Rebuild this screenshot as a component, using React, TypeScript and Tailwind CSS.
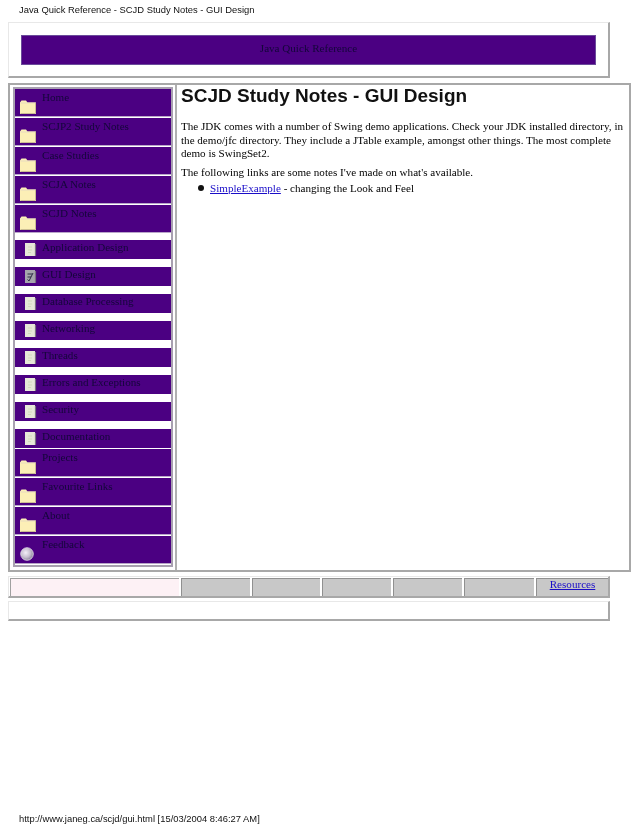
const Folder = () => (
  <svg width="16" height="14" viewBox="0 0 16 14" className="shrink-0">
    <path d="M0 2.5 L1.5 0.5 H6 L7.5 2.5 H16 V14 H0 Z" fill="#fcefb6" />
    <path d="M0.5 3 H15.5" stroke="#e8dcc0" strokeWidth="1" />
    <path d="M15.5 3 V13.5 H0.5" fill="none" stroke="#cbbd92" strokeWidth="1" />
  </svg>
);
const Doc = ({ active }: { active?: boolean }) => (
  <svg width="12" height="13" viewBox="0 0 12 13" className="shrink-0">
    <rect x="0" y="0" width="10" height="13" fill={active ? "#a5a5ad" : "#e6e8d8"} />
    <path d="M10.5 1 V13" stroke="#77727f" strokeWidth="1.2" />
    {active ? (
      <path d="M2.5 9.5 L4 11 L8 3 M2.5 4 H7 M2.5 7 H6" fill="none" stroke="#2c2c44" strokeWidth="1" />
    ) : (
      <path d="M3 4 H7 M3 7 H7 M3 9.5 H6" stroke="#d2dabd" strokeWidth="1" />
    )}
  </svg>
);
const Ball = () => (
  <svg width="14" height="14" viewBox="0 0 14 14" className="shrink-0">
    <defs>
      <radialGradient id="b" cx="0.4" cy="0.4" r="0.6">
        <stop offset="0" stopColor="#f4eef8" />
        <stop offset="0.6" stopColor="#c8c0d0" />
        <stop offset="1" stopColor="#9088a0" />
      </radialGradient>
    </defs>
    <circle cx="7" cy="7" r="6.3" fill="url(#b)" stroke="#e8e4ee" strokeWidth="0.8" />
  </svg>
);

const MainRow = ({ label, icon }: { label: string; icon?: "ball" }) => (
  <div className="h-[28px] bg-[#4b0082] border-b border-[#b9a6c9] flex pl-[5px] mb-px last:mb-0">
    <div className="pt-[11px] w-[21px]">{icon === "ball" ? <Ball /> : <Folder />}</div>
    <div className="pt-px pl-px text-[11.1px] leading-[14px] text-[#14063a]">{label}</div>
  </div>
);

const SubRow = ({ label, active, last }: { label: string; active?: boolean; last?: boolean }) => (
  <div className={`h-[19px] bg-[#4b0082] flex pl-[10px] ${last ? "mb-px" : "mb-2"}`}>
    <div className="w-[17px] pt-[3px]"><Doc active={active} /></div>
    <div className="text-[11.1px] leading-[14px] text-[#14063a]">{label}</div>
  </div>
);

export default function App() {
  return (
    <div className="h-[826px] bg-white flex flex-col font-['Liberation_Serif',serif] text-[11.1px] text-black overflow-hidden blur-[0.3px]">
      <div className="pl-[19px] pt-[3px] h-[22px] font-['Liberation_Sans',sans-serif] text-[9.4px] leading-[13px] text-[#111]">
        Java Quick Reference - SCJD Study Notes - GUI Design
      </div>

      <div className="ml-2 w-[602px] h-[56px] bg-white border border-[#e8e8e8] border-r-2 border-b-2 border-r-[#a8a8a8] border-b-[#a8a8a8] px-3 pt-3">
        <div className="h-[30px] bg-[#4b0082] border border-[#6a4a9a] text-center leading-[25px] text-[#14063a]">
          Java Quick Reference
        </div>
      </div>

      <div className="ml-2 mt-[5px] w-[623px] h-[489px] border-2 border-[#a8a8a8] flex">
        <div className="w-[167px] h-[485px] border-r-2 border-[#b0b0b0] pl-[3px] pt-[2px] shrink-0">
          <div className="w-[160px] h-[480px] border-2 border-[#a8a0b0] flex flex-col">
            <MainRow label="Home" />
            <MainRow label="SCJP2 Study Notes" />
            <MainRow label="Case Studies" />
            <MainRow label="SCJA Notes" />
            <MainRow label="SCJD Notes" />
            <div className="h-[6px]" />
            <SubRow label="Application Design" />
            <SubRow label="GUI Design" active />
            <SubRow label="Database Processing" />
            <SubRow label="Networking" />
            <SubRow label="Threads" />
            <SubRow label="Errors and Exceptions" />
            <SubRow label="Security" />
            <SubRow label="Documentation" last />
            <MainRow label="Projects" />
            <MainRow label="Favourite Links" />
            <MainRow label="About" />
            <MainRow label="Feedback" icon="ball" />
          </div>
        </div>
        <div className="pl-[4px]">
          <h1 className="font-['Liberation_Sans',sans-serif] font-bold text-[19px] leading-[22px] mb-[13px] text-[#111]">
            SCJD Study Notes - GUI Design
          </h1>
          <p className="leading-[13.5px] w-[446px] mb-[4px]">
            The JDK comes with a number of Swing demo applications. Check your JDK installed directory, in the demo/jfc directory. They include a JTable example, amongst other things. The most complete demo is SwingSet2.
          </p>
          <p className="leading-[14px]">The following links are some notes I've made on what's available.</p>
          <div className="flex items-center leading-[14px] pl-[17px] mt-[2px]">
            <span className="w-[6px] h-[6px] rounded-full bg-[#111] mr-[6px]" />
            <span><a className="text-[#1a0dc8] underline">SimpleExample</a> - changing the Look and Feel</span>
          </div>
        </div>
      </div>

      <div className="ml-2 mt-[4px] w-[602px] h-[22px] border-b-2 border-r-2 border-t border-l border-t-[#e8e8e8] border-l-[#e8e8e8] border-[#a8a8a8] flex gap-[2px] pl-px pt-px">
        <div className="w-[169px] h-[18px] bg-[#fdf1f5] border-l border-t border-[#a0a0a0]" />
        <div className="w-[69px] h-[18px] bg-[#c8c8c8] border-l border-t border-[#909090]" />
        <div className="w-[69px] h-[18px] bg-[#c8c8c8] border-l border-t border-[#909090]" />
        <div className="w-[69px] h-[18px] bg-[#c8c8c8] border-l border-t border-[#909090]" />
        <div className="w-[69px] h-[18px] bg-[#c8c8c8] border-l border-t border-[#909090]" />
        <div className="w-[70px] h-[18px] bg-[#c8c8c8] border-l border-t border-[#909090]" />
        <div className="w-[72px] h-[18px] bg-[#c8c8c8] border-l border-t border-[#909090] text-center leading-[11px]">
          <a className="text-[#1a0dc8] underline">Resources</a>
        </div>
      </div>

      <div className="ml-2 mt-[3px] w-[602px] h-[20px] border-b-2 border-r-2 border-t border-l border-t-[#e8e8e8] border-l-[#e8e8e8] border-[#a8a8a8]" />

      <div className="mt-auto pl-[19px] pb-px h-[14px] font-['Liberation_Sans',sans-serif] text-[9.4px] leading-[13px] text-[#111]">
        http://www.janeg.ca/scjd/gui.html [15/03/2004 8:46:27 AM]
      </div>
    </div>
  );
}
